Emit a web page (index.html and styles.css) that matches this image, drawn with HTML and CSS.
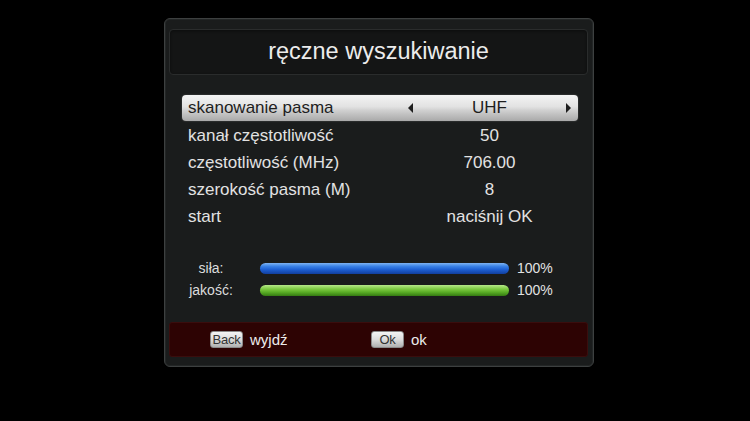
FILE: index.html
```html
<!DOCTYPE html>
<html lang="pl">
<head>
<meta charset="utf-8">
<title>ręczne wyszukiwanie</title>
<link rel="stylesheet" href="styles.css">
</head>
<body>
<div class="screen">
  <div class="panel">
    <div class="title">ręczne wyszukiwanie</div>
    <div class="list">
      <div class="row active">
        <span class="label">skanowanie pasma</span>
        <span class="value"><i class="arr left"></i><span>UHF</span><i class="arr right"></i></span>
      </div>
      <div class="row">
        <span class="label">kanał częstotliwość</span>
        <span class="value"><span>50</span></span>
      </div>
      <div class="row">
        <span class="label">częstotliwość (MHz)</span>
        <span class="value"><span>706.00</span></span>
      </div>
      <div class="row">
        <span class="label">szerokość pasma (M)</span>
        <span class="value"><span>8</span></span>
      </div>
      <div class="row">
        <span class="label">start</span>
        <span class="value"><span>naciśnij OK</span></span>
      </div>
    </div>
    <div class="signal">
      <div class="sig-row">
        <span class="sig-label">siła:</span>
        <span class="bar blue" style="width:249px"></span>
        <span class="pct">100%</span>
      </div>
      <div class="sig-row">
        <span class="sig-label">jakość:</span>
        <span class="bar green" style="width:249px"></span>
        <span class="pct">100%</span>
      </div>
    </div>
    <div class="footer">
      <div class="hint first"><span class="key">Back</span><span class="hint-text">wyjdź</span></div>
      <div class="hint"><span class="key ok">Ok</span><span class="hint-text">ok</span></div>
    </div>
  </div>
</div>
</body>
</html>
```

FILE: styles.css
```css
html, body {
  margin: 0;
  padding: 0;
  background: #000;
}

body {
  width: 750px;
  height: 421px;
  overflow: hidden;
  font-family: "Liberation Sans", Arial, sans-serif;
}

.screen {
  padding: 18px 0 0 164px;
}

.panel {
  box-sizing: border-box;
  width: 430px;
  height: 349px;
  border: 1px solid #3d4040;
  border-radius: 6px;
  background: #1a1c1c;
  padding: 10px 5px 0 4px;
  box-shadow: inset 0 0 0 1px #232626;
}

.title {
  box-sizing: border-box;
  height: 46px;
  border: 1px solid #2a2c2c;
  border-radius: 4px;
  background: #141515;
  box-shadow: inset 0 1px 3px #0c0d0d;
  color: #ececec;
  font-size: 23.5px;
  display: flex;
  align-items: center;
  justify-content: center;
  padding-bottom: 2px;
}

.list {
  margin: 20px 0 0 13px;
  width: 396px;
}

.row {
  display: grid;
  grid-template-columns: 212px 1fr;
  align-items: center;
  height: 27px;
  padding-left: 6px;
  color: #e2e2e2;
  font-size: 17px;
}

.row.active {
  height: 26px;
  margin-bottom: 1px;
  color: #1e1e1e;
  border-radius: 4px;
  background: linear-gradient(#f4f4f4 0%, #e2e2e2 45%, #cfcfcf 60%, #a9a9a9 100%);
  box-shadow: 0 0 2px rgba(255, 255, 255, 0.25);
}

.value {
  display: flex;
  align-items: center;
  justify-content: center;
  padding: 0 7px 0 8px;
}

.row.active .value {
  justify-content: space-between;
}

.arr {
  width: 0;
  height: 0;
  border-top: 5.5px solid transparent;
  border-bottom: 5.5px solid transparent;
}

.arr.left {
  border-right: 5px solid #1e1e1e;
}

.arr.right {
  border-left: 5px solid #1e1e1e;
}

.signal {
  margin: 27px 0 0 13px;
}

.sig-row {
  display: flex;
  align-items: center;
  height: 22px;
}

.sig-label {
  width: 58px;
  text-align: center;
  color: #dcdcdc;
  font-size: 14px;
  margin-right: 20px;
}

.bar {
  display: block;
  height: 11px;
  border-radius: 6px;
}

.bar.blue {
  background: linear-gradient(#7fb4f2 0%, #3a82e6 30%, #1d5fd2 60%, #123f9e 100%);
}

.bar.green {
  background: linear-gradient(#b6e88a 0%, #7fcb44 35%, #59ad25 65%, #347a12 100%);
}

.pct {
  margin-left: 8px;
  color: #e2e2e2;
  font-size: 14px;
}

.footer {
  box-sizing: border-box;
  margin-top: 21px;
  height: 35px;
  border: 1px solid #3a0d0d;
  border-radius: 3px;
  background: #2d0303;
  display: flex;
  align-items: center;
  padding-left: 40px;
}

.hint {
  display: flex;
  align-items: center;
}

.hint.first {
  width: 161px;
}

.key {
  box-sizing: border-box;
  width: 33px;
  height: 17px;
  border: 1px solid #8a8a8a;
  border-radius: 3px;
  background: linear-gradient(#f4f4f4 0%, #dcdcdc 50%, #b0b0b0 100%);
  color: #333;
  font-size: 13px;
  line-height: 15px;
  text-align: center;
  letter-spacing: -0.2px;
}

.hint-text {
  margin-left: 7px;
  color: #ececec;
  font-size: 15px;
}
```
